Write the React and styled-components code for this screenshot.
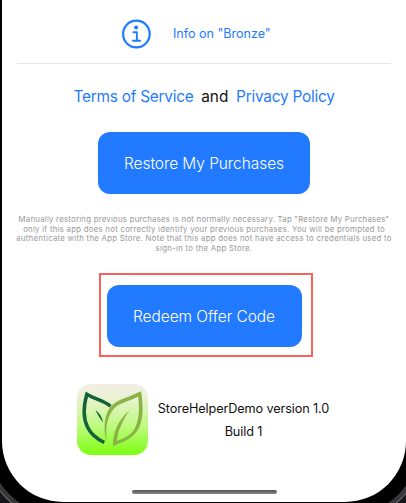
import React from 'react';
import styled, { createGlobalStyle } from 'styled-components';

const GlobalStyle = createGlobalStyle`
  * { box-sizing: border-box; }
  html, body { margin: 0; background: #17171c; }
  body { font-family: Inter, "Liberation Sans", sans-serif; overflow: hidden; }
`;

const Stage = styled.div`
  width: 406px;
  height: 503px;
  padding-left: 2px;
  overflow: hidden;
`;

const Screen = styled.main`
  display: flex;
  flex-direction: column;
  align-items: center;
  width: 404px;
  height: 501.5px;
  background: #fff;
  border-radius: 0 0 61px 61px;
  box-shadow: 0 0 0 14.5px #000, 0 0 0 19px #38383a, 0 0 0 19.8px #77777a;
`;

const InfoRow = styled.a`
  display: flex;
  align-items: center;
  align-self: stretch;
  gap: 22px;
  height: 64px;
  margin: 0 15px;
  padding: 4px 0 0 104px;
  border-bottom: 1px solid #e5e5e6;
  color: #1f7cff;
  font-size: 12.6px;
  letter-spacing: -0.03px;
  white-space: nowrap;
`;

const LegalRow = styled.nav`
  display: flex;
  align-items: center;
  gap: 7.7px;
  height: 20px;
  margin-top: 23px;
  font-size: 15.4px;
  line-height: 20px;
  letter-spacing: -0.24px;
  color: #111;
  white-space: nowrap;
`;

const Conjunction = styled.span`
  letter-spacing: 0;
`;

const Link = styled.a`
  color: #1f7cff;
`;

const Button = styled.button`
  width: ${(p) => p.$width}px;
  height: 62px;
  padding: 2px 0 0;
  border: 0;
  border-radius: 12px;
  background: #217aff;
  color: #fff;
  font: 300 15.5px/20px Inter, "Liberation Sans", sans-serif;
  letter-spacing: -0.07px;
`;

const RestoreArea = styled.section`
  display: flex;
  justify-content: center;
  margin-top: 25px;
`;

const Note = styled.p`
  margin: 21px 0 0;
  width: 396px;
  color: #98989a;
  font-size: 7.8px;
  line-height: 9.6px;
  text-align: center;
  white-space: nowrap;
`;

const NoteLine = styled.span`
  display: block;
  letter-spacing: ${(p) => p.$tracking}px;
`;

const Highlight = styled.section`
  display: flex;
  align-items: center;
  justify-content: center;
  width: 214px;
  height: 84px;
  margin: 19.6px 0 0 4px;
  border: 2px solid #fb6158;
  padding: 2px 4px 0 0;
`;

const About = styled.footer`
  display: flex;
  align-items: center;
  gap: 9.5px;
  margin: 27.4px 0 0 -1.5px;
`;

const Version = styled.div`
  color: #111;
  font-size: 12.7px;
  line-height: 23px;
  letter-spacing: -0.12px;
  text-align: center;
  white-space: nowrap;
`;

const HomeBar = styled.div`
  width: 145px;
  height: 4.5px;
  margin: auto 0 7.5px;
  border-radius: 3px;
  background: linear-gradient(#555, #888);
`;

function InfoIcon() {
  return (
    <svg width="30" height="30" viewBox="0 0 30 30" fill="none" stroke="#1f7cff">
      <circle cx="15.4" cy="15" r="13.3" strokeWidth="2.2" />
      <circle cx="15.1" cy="8.4" r="2" fill="#1f7cff" stroke="none" />
      <path d="M12.4 13.2h3.5v8.3M11.9 21.8h7.2" strokeWidth="1.9" strokeLinecap="round" strokeLinejoin="round" />
    </svg>
  );
}

function LeafIcon() {
  return (
    <svg width="71" height="71" viewBox="0 0 71 71" fill="none">
      <defs>
        <linearGradient id="leafBg" x1="0" y1="0" x2="0" y2="1">
          <stop offset="0" stopColor="#f3eee5" />
          <stop offset=".2" stopColor="#eaf2d2" />
          <stop offset=".6" stopColor="#bdfa7e" />
          <stop offset="1" stopColor="#7dff10" />
        </linearGradient>
      </defs>
      <rect width="71" height="71" rx="14" fill="url(#leafBg)" />
      <path d="M33.5 22.3C26 15.5 18 15.5 9.8 10.2C6.5 22 6 34 10.5 43C14 50.5 20 55 27.3 58.5" stroke="#146338" strokeWidth="3.5" />
      <path d="M18.3 26Q24.5 30 26 38.5Q22 33.5 18.3 26Z" fill="#146338" />
      <path d="M30 58Q26.5 49 28 37C29.5 26 35 19.5 43 16Q55 11.5 64 7.2C66.5 22 66.5 38 60 47C54 56 46 57.5 36 62C36 47 41 37 52.5 26C45 38 41 46 39.8 57C48 54 53.5 51.5 57.5 45C62.5 36 62.5 24 61.2 12.5C53 17 43 18.5 37.5 24C29 33 28.3 47 30 58Z" fill="#8bb244" />
    </svg>
  );
}

export default function App() {
  return (
    <>
      <GlobalStyle />
      <Stage>
        <Screen>
          <InfoRow>
            <InfoIcon />
            <span>Info on "Bronze"</span>
          </InfoRow>
          <LegalRow>
            <Link>Terms of Service</Link>
            <Conjunction>and</Conjunction>
            <Link>Privacy Policy</Link>
          </LegalRow>
          <RestoreArea>
            <Button $width={212}>Restore My Purchases</Button>
          </RestoreArea>
          <Note>
            <NoteLine $tracking={0.24}>Manually restoring previous purchases is not normally necessary. Tap "Restore My Purchases"</NoteLine>
            <NoteLine $tracking={0.26}>only if this app does not correctly identify your previous purchases. You will be prompted to</NoteLine>
            <NoteLine $tracking={0.27}>authenticate with the App Store. Note that this app does not have access to credentials used to</NoteLine>
            <NoteLine $tracking={0.28}>sign-in to the App Store.</NoteLine>
          </Note>
          <Highlight>
            <Button $width={195}>Redeem Offer Code</Button>
          </Highlight>
          <About>
            <LeafIcon />
            <Version>
              <div>StoreHelperDemo version 1.0</div>
              <div>Build 1</div>
            </Version>
          </About>
          <HomeBar />
        </Screen>
      </Stage>
    </>
  );
}
